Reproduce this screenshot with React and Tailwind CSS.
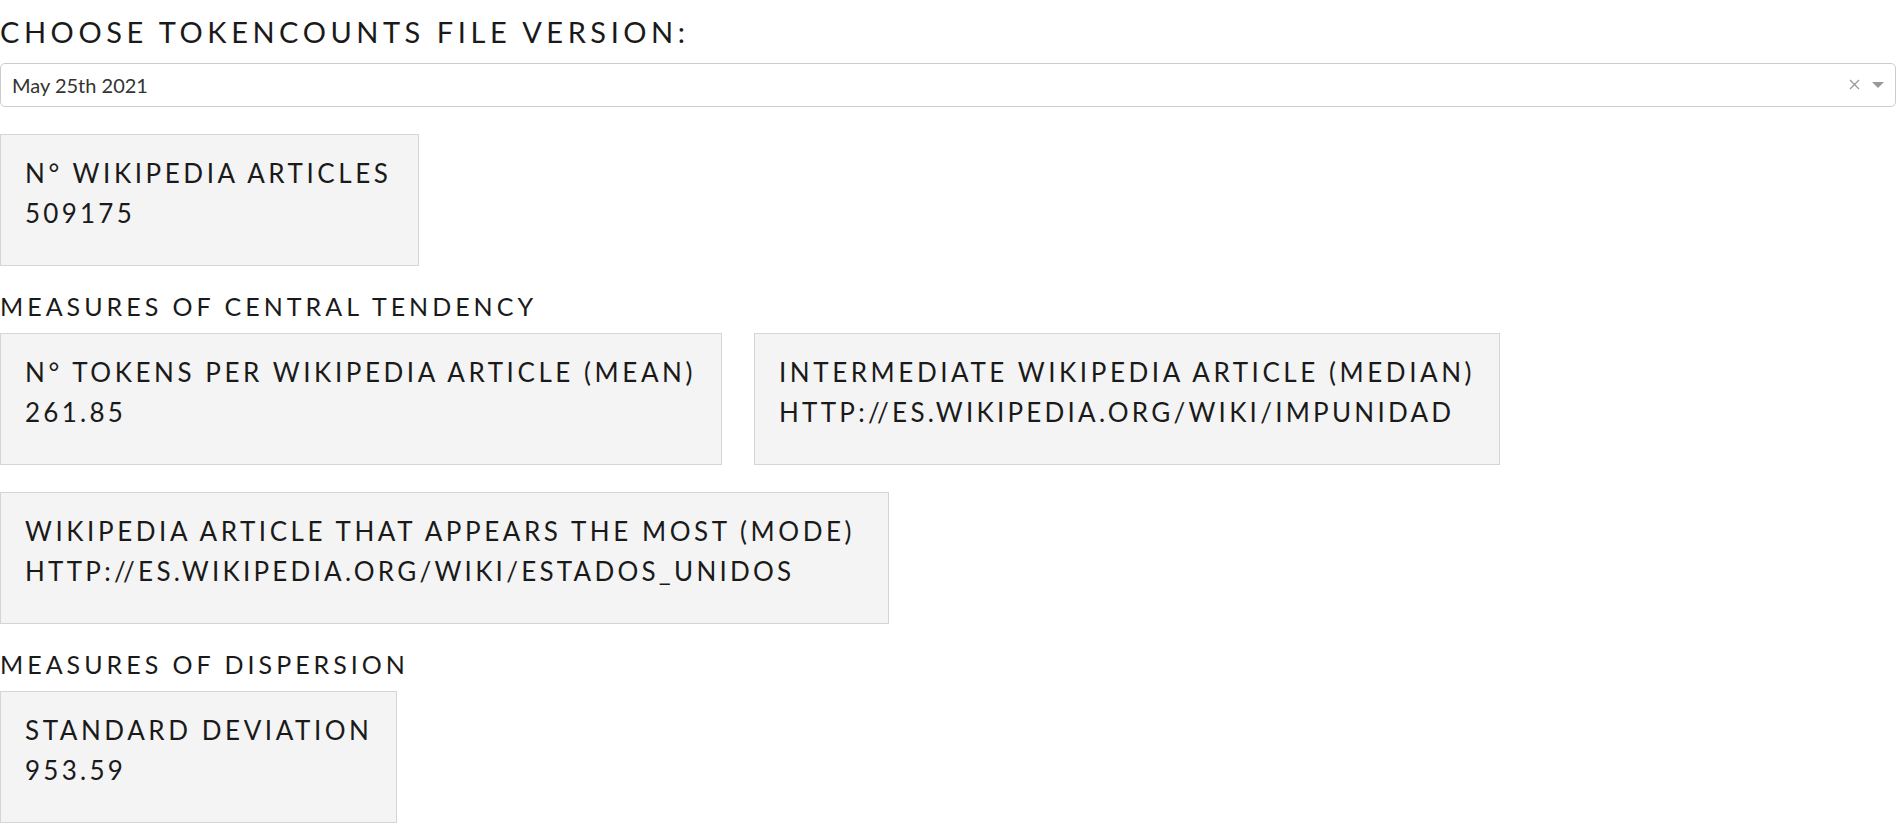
import React from 'react'

const StatCard = ({ label, value, className }) => (
    <div className={`border border-[#d5d5d5] bg-[#f4f4f4] pt-[18px] pb-[32px] px-[24px] ${className}`}>
        <p className="text-[26px] leading-[40px] tracking-[0.137em] uppercase whitespace-nowrap">{label}</p>
        <p className="text-[26px] leading-[40px] tracking-[0.125em] uppercase whitespace-nowrap">{value}</p>
    </div>
)

function App() {
    return (
        <div className="w-[1897px] min-h-[827px] bg-white font-['Lato',sans-serif] text-[#1a1a1a]">
            <h3 className="pt-[15px] text-[29px] leading-[1.2] tracking-[0.157em] uppercase whitespace-nowrap">
                Choose tokencounts file version:
            </h3>

            {/* dropdown */}
            <div className="mt-[13px] h-[44px] w-[1896px] border border-[#ccc] rounded-[5px] flex items-center pl-[11px] pr-[11px]">
                <span className="flex-1 text-[20px] leading-[1.2] text-[#333]">May 25th 2021</span>
                <svg width="11" height="11" viewBox="0 0 11 11" className="mr-[12px]">
                    <path d="M1 1 L10 10 M10 1 L1 10" stroke="#999" strokeWidth="1.3" fill="none" />
                </svg>
                <span className="w-0 h-0 border-t-[6px] border-t-[#999] border-x-[6.5px] border-x-transparent"></span>
            </div>

            <StatCard className="mt-[27px] w-[419px]" label="N° Wikipedia articles" value="509175" />

            <h5 className="mt-[25px] mb-[12px] text-[25px] leading-[30px] tracking-[0.16em] uppercase whitespace-nowrap">
                Measures of central tendency
            </h5>
            <div className="flex gap-[32px]">
                <StatCard className="w-[722px]" label="N° tokens per Wikipedia article (mean)" value="261.85" />
                <StatCard className="w-[746px]" label="Intermediate Wikipedia article (median)" value="http://es.wikipedia.org/wiki/Impunidad" />
            </div>
            <StatCard className="mt-[27px] w-[889px]" label="Wikipedia article that appears the most (mode)" value="http://es.wikipedia.org/wiki/Estados_Unidos" />

            <h5 className="mt-[25px] mb-[12px] text-[25px] leading-[30px] tracking-[0.16em] uppercase whitespace-nowrap">
                Measures of dispersion
            </h5>
            <StatCard className="w-[397px]" label="Standard deviation" value="953.59" />
        </div>
    )
}

export default App
